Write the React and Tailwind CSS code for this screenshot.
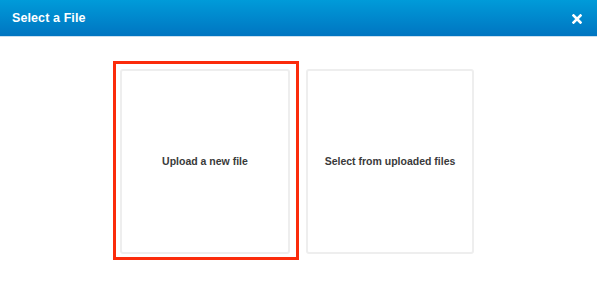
import React from "react";

export default function App() {
  return (
    <div className="w-[597px] h-[285px] bg-white overflow-hidden" style={{ fontFamily: '"Liberation Sans", Arial, sans-serif' }}>
      <div className="h-[37px] bg-gradient-to-b from-[#009bd9] to-[#0075c1] flex items-center justify-between pl-[12px] pr-[15px] border-b border-[#c9dff0]">
        <span className="text-white font-bold text-[12.5px] tracking-[0.1px]">Select a File</span>
        <svg width="10" height="10" viewBox="0 0 10 10" className="mt-[1px]">
          <path d="M1.5 1.5 L8.5 8.5 M8.5 1.5 L1.5 8.5" stroke="white" strokeWidth="2.6" strokeLinecap="square" />
        </svg>
      </div>
      <div className="flex gap-[16px] pt-[32px] pl-[120px]">
        <div className="relative w-[170px] h-[185px] rounded-[3px] border-2 border-[#eeeeee] flex items-center justify-center">
          <span className="text-[#3a3a3a] font-bold text-[10.5px]">Upload a new file</span>
          <span className="absolute -left-[9px] -top-[10px] -right-[11px] -bottom-[8px] border-[3px] border-[#fb2b0b] pointer-events-none" />
        </div>
        <div className="w-[168px] h-[185px] rounded-[3px] border-2 border-[#eeeeee] flex items-center justify-center">
          <span className="text-[#3a3a3a] font-bold text-[10.5px]">Select from uploaded files</span>
        </div>
      </div>
    </div>
  );
}
